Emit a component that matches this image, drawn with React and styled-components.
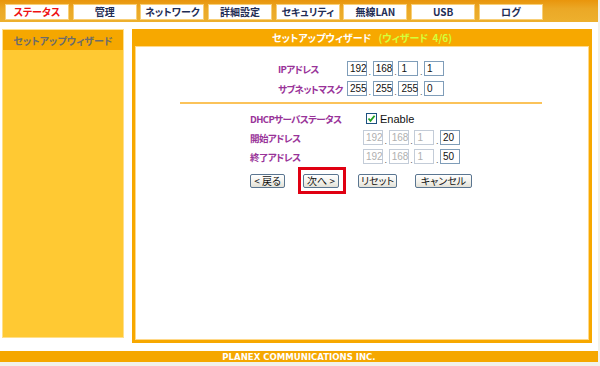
import React from "react";
import styled, { createGlobalStyle } from "styled-components";

const Global = createGlobalStyle`
  html, body { margin: 0; padding: 0; background: #f1f1ec; }
  body { font-family: "Noto Sans CJK JP", "Liberation Sans", sans-serif; }
  * { box-sizing: border-box; }
`;

const Page = styled.div`
  width: 598px;
  height: 362px;
  background: #ffffff;
  display: flex;
  flex-direction: column;
`;

const TopBar = styled.div`
  height: 22px;
  background: linear-gradient(#e9950c, #eba826 40%, #edb02e);
  padding: 4px 0 0 5px;
  display: grid;
  grid-template-columns: repeat(8, 64px);
  column-gap: 3.7px;
  align-items: start;
`;

const Tab = styled.div`
  height: 16px;
  background: #ffffff;
  border: 1px solid #f8cf78;
  display: flex;
  align-items: center;
  justify-content: center;
  font-size: 10px;
  font-weight: bold;
  font-feature-settings: "palt";
  color: ${(p) => (p.$active ? "#ee1111" : "#1f2d55")};
  line-height: 1;
`;

const Body = styled.div`
  display: flex;
  align-items: flex-start;
  padding: 7px 0 0 2px;
  gap: 8px;
`;

const Sidebar = styled.div`
  width: 122px;
  height: 309px;
  background: #ffc933;
  border: 1px solid #ffe08c;
  display: flex;
  flex-direction: column;
`;

const SideHead = styled.div`
  height: 20px;
  background: #f5a700;
  color: #6b6b6b;
  font-size: 10px;
  font-weight: bold;
  font-feature-settings: "palt";
  display: flex;
  align-items: center;
  justify-content: center;
`;

const Main = styled.div`
  width: 460px;
  height: 314px;
  background: #f7a800;
  padding: 0 3px 3px 3px;
  display: flex;
  flex-direction: column;
`;

const MainHead = styled.div`
  height: 17px;
  display: flex;
  align-items: center;
  justify-content: center;
  gap: 7px;
  font-size: 10px;
  font-weight: bold;
  font-feature-settings: "palt";
  color: #ffffff;
`;

const Sub = styled.span`
  color: #d4ff3a;
  word-spacing: 2px;
`;

const Content = styled.div`
  flex: 1;
  background: #ffffff;
  border: 1px solid #ffd98a;
  display: flex;
  flex-direction: column;
`;

const Section = styled.div`
  display: flex;
  flex-direction: column;
  gap: ${(p) => p.$gap}px;
  padding-left: ${(p) => p.$left}px;
  margin-top: ${(p) => p.$top}px;
`;

const Row = styled.div`
  display: flex;
  align-items: center;
  height: 15px;
`;

const Label = styled.div`
  width: ${(p) => p.$w}px;
  flex-shrink: 0;
  color: #993399;
  font-size: 9.5px;
  font-weight: bold;
  font-feature-settings: "palt";
  letter-spacing: -0.6px;
  white-space: nowrap;
  overflow: visible;
`;

const IpGroup = styled.div`
  display: flex;
  align-items: flex-end;
`;

const Octet = styled.div`
  width: 20px;
  height: 15px;
  border: 1px solid ${(p) => (p.$disabled ? "#c3ccd8" : "#7f9db9")};
  background: #fff;
  color: ${(p) => (p.$disabled ? "#b0b0b0" : "#111")};
  font-family: "Liberation Sans", Arial, sans-serif;
  font-size: 10px;
  line-height: 13px;
  padding-left: 2px;
`;

const Dot = styled.span`
  width: 5.7px;
  text-align: center;
  font-family: "Liberation Sans", Arial, sans-serif;
  font-size: 9px;
  line-height: 7px;
  color: #555;
`;

const Divider = styled.div`
  height: 2px;
  margin: 6px 46px 0 44px;
  background: #fbc35a;
`;

const CheckWrap = styled.label`
  display: flex;
  align-items: center;
  gap: 3px;
  margin-left: 3px;
  font-family: "Liberation Sans", Arial, sans-serif;
  font-size: 11px;
  color: #111;
`;

const Box = styled.span`
  width: 11px;
  height: 11px;
  border: 1px solid #1c5180;
  background: #fff;
  display: flex;
  align-items: center;
  justify-content: center;
`;

const ButtonRow = styled.div`
  display: flex;
  align-items: center;
  margin-top: -1px;
`;

const Btn = styled.button`
  width: ${(p) => p.$w}px;
  height: 14px;
  margin-left: ${(p) => p.$ml || 0}px;
  padding: 0;
  border: 1px solid #5a7590;
  border-radius: 2px;
  background: linear-gradient(#ffffff, #f1f0ea 60%, #e2e0d6);
  font-family: "Noto Sans CJK JP", sans-serif;
  font-size: 10px;
  font-feature-settings: "palt";
  line-height: 12px;
  color: #111;
  display: flex;
  align-items: center;
  justify-content: center;
  white-space: pre;
`;

const Highlight = styled.div`
  margin-left: 13px;
  border: 3px solid #e00012;
  padding: 4px 4px 3px 2px;
  display: flex;
`;

const Footer = styled.div`
  margin-top: auto;
  height: 11px;
  background: #f5a700;
  color: #ffffff;
  font-family: "DejaVu Sans Condensed", "DejaVu Sans", sans-serif;
  font-stretch: condensed;
  font-weight: bold;
  font-size: 9.5px;
  line-height: 11px;
  text-align: center;
`;

const tabs = ["ステータス", "管理", "ネットワーク", "詳細設定", "セキュリティ", "無線LAN", "USB", "ログ"];

function Ip({ values, disabledCount = 0 }) {
  return (
    <IpGroup>
      {values.map((v, i) => (
        <React.Fragment key={i}>
          {i > 0 && <Dot>.</Dot>}
          <Octet $disabled={i < disabledCount}>{v}</Octet>
        </React.Fragment>
      ))}
    </IpGroup>
  );
}

export default function App() {
  return (
    <>
      <Global />
      <Page>
        <TopBar>
          {tabs.map((t, i) => (
            <Tab key={t} $active={i === 0}>{t}</Tab>
          ))}
        </TopBar>
        <Body>
          <Sidebar>
            <SideHead>セットアップウィザード</SideHead>
          </Sidebar>
          <Main>
            <MainHead>
              <span>セットアップウィザード</span>
              <Sub>(ウィザード 4/6)</Sub>
            </MainHead>
            <Content>
              <Section $gap={5} $left={142} $top={14}>
                <Row>
                  <Label $w={69}>IPアドレス</Label>
                  <Ip values={["192", "168", "1", "1"]} />
                </Row>
                <Row>
                  <Label $w={69}>サブネットマスク</Label>
                  <Ip values={["255", "255", "255", "0"]} />
                </Row>
              </Section>
              <Divider />
              <Section $gap={4} $left={114} $top={7}>
                <Row>
                  <Label $w={113}>DHCPサーバステータス</Label>
                  <CheckWrap>
                    <Box>
                      <svg width="9" height="9" viewBox="0 0 9 9">
                        <path d="M1.5 4.5 L3.5 6.8 L7.6 1.8" stroke="#21a121" strokeWidth="1.8" fill="none" />
                      </svg>
                    </Box>
                    Enable
                  </CheckWrap>
                </Row>
                <Row>
                  <Label $w={113}>開始アドレス</Label>
                  <Ip values={["192", "168", "1", "20"]} disabledCount={3} />
                </Row>
                <Row>
                  <Label $w={113}>終了アドレス</Label>
                  <Ip values={["192", "168", "1", "50"]} disabledCount={3} />
                </Row>
                <ButtonRow>
                  <Btn $w={35}>{"< 戻る"}</Btn>
                  <Highlight>
                    <Btn $w={36}>{"次へ >"}</Btn>
                  </Highlight>
                  <Btn $w={39} $ml={12}>リセット</Btn>
                  <Btn $w={57} $ml={18}>キャンセル</Btn>
                </ButtonRow>
              </Section>
            </Content>
          </Main>
        </Body>
        <Footer>PLANEX COMMUNICATIONS INC.</Footer>
      </Page>
    </>
  );
}
